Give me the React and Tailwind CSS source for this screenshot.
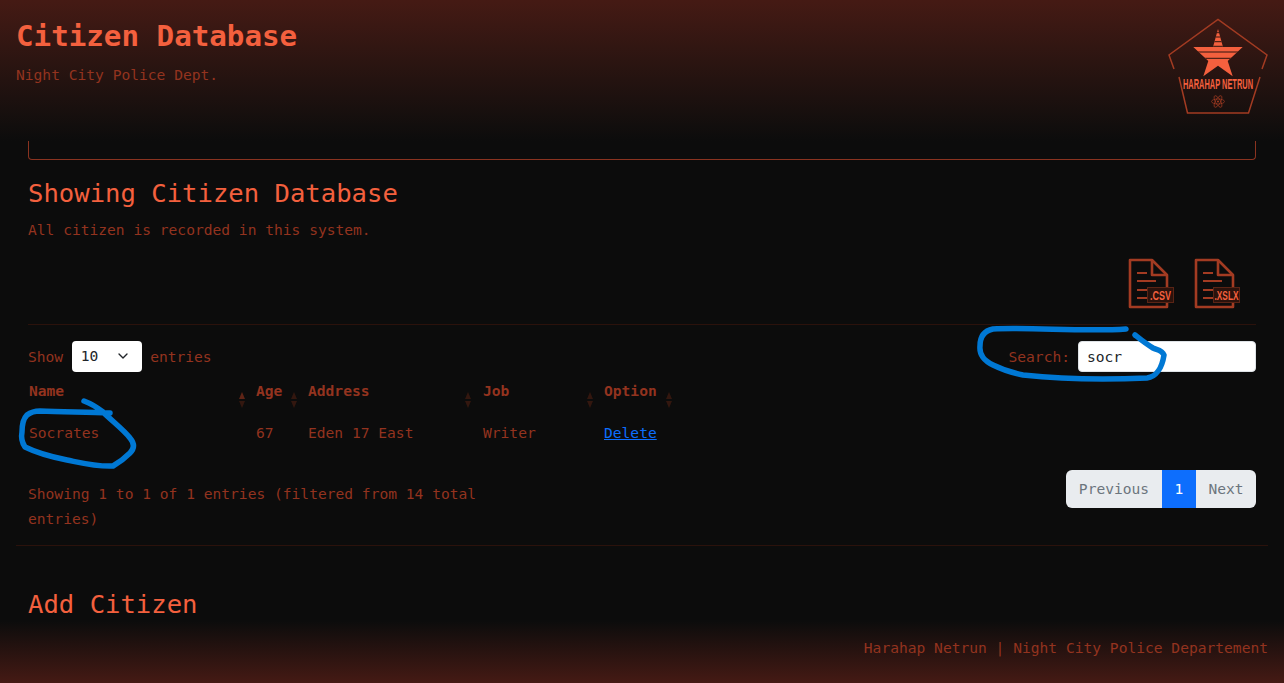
import { ChevronDown } from 'lucide-react'

const columns = [
  { label: 'Name', width: 'w-[227px]', arrow: 'right-[10px]', active: true },
  { label: 'Age', width: 'w-[52px]', arrow: 'right-[10px]' },
  { label: 'Address', width: 'w-[175px]', arrow: 'right-[11px]' },
  { label: 'Job', width: 'w-[121px]', arrow: 'right-[10px]' },
  { label: 'Option', width: 'w-[79px]', arrow: 'right-[10px]' },
]

const starPath = 'M98 29 103 47H122.700L107.700 61 112.700 76.300 98 65.700 83.300 76.300 88.300 61 73.300 47H93Z'

function SortArrows({ position, active }) {
  return (
    <span className={`absolute top-[11px] flex flex-col gap-[2px] ${position}`}>
      <span className={`h-0 w-0 border-x-[3.5px] border-b-[7px] border-x-transparent ${active ? 'border-b-[#5f2416]' : 'border-b-[#33170f]'}`} />
      <span className="h-0 w-0 border-x-[3.5px] border-t-[7px] border-x-transparent border-t-[#33170f]" />
    </span>
  )
}

function Logo() {
  const stripes = [32.7, 37, 41.7, 46.3, 52, 58.3]
  return (
    <svg width="164" height="130" viewBox="0 0 164 130" fill="none">
      <defs>
        <clipPath id="star-clip">
          <path d={starPath} />
        </clipPath>
      </defs>
      <path d="M54 69 49 55 98 19.500 147 55 142 69M140 77 128.500 113H67.500L59 77" stroke="#a33b22" strokeWidth="1.500" />
      <path d={starPath} fill="#f4603e" />
      <g clipPath="url(#star-clip)">
        {stripes.map((y) => (
          <path key={y} d={`M70 ${y}H126`} stroke="#2e140e" strokeWidth="1" />
        ))}
      </g>
      <text x="98" y="89.300" textAnchor="middle" textLength="70" lengthAdjust="spacingAndGlyphs" fill="#f4603e" fontFamily="'Liberation Sans', sans-serif" fontWeight="700" fontSize="14">
        HARAHAP NETRUN
      </text>
      <g stroke="#a33b22" strokeWidth="0.700">
        <ellipse cx="98" cy="101.500" rx="6.500" ry="2.500" />
        <ellipse cx="98" cy="101.500" rx="6.500" ry="2.500" transform="rotate(60 98 101.500)" />
        <ellipse cx="98" cy="101.500" rx="6.500" ry="2.500" transform="rotate(120 98 101.500)" />
      </g>
      <circle cx="98" cy="101.500" r="1" fill="#a33b22" />
    </svg>
  )
}

function FileIcon({ label, textWidth }) {
  return (
    <svg width="46" height="52" viewBox="0 0 46 52" fill="none">
      <path d="M2 2H24L39 17V49H2Z" stroke="#a33b22" strokeWidth="2.600" strokeLinejoin="round" />
      <path d="M24 2V17H39" stroke="#a33b22" strokeWidth="2.600" strokeLinejoin="round" />
      <path d="M9 15H19M9 23H28M9 32H19M9 40H19" stroke="#a33b22" strokeWidth="2" />
      <rect x="19.500" y="29.500" width="26" height="15" fill="#2b120c" stroke="#5a2415" />
      <text x="32.500" y="41.500" textAnchor="middle" textLength={textWidth} lengthAdjust="spacingAndGlyphs" fill="#f4603e" fontFamily="'Liberation Sans', sans-serif" fontWeight="700" fontSize="12">
        {label}
      </text>
    </svg>
  )
}

export default function App() {
  return (
    <div className="relative flex h-[683px] flex-col overflow-hidden bg-[#0c0c0c] font-['DejaVu_Sans_Mono',monospace] text-[14.600px] text-[#93331f]">
      <header className="relative flex h-[141px] shrink-0 justify-between bg-gradient-to-b from-[#451a14] to-[#0c0c0c] pl-4">
        <div>
          <h1 className="mt-[17px] text-[29.200px] leading-[38px] font-bold text-[#f4603e]">Citizen Database</h1>
          <p className="mt-[10px] leading-[20px]">Night City Police Dept.</p>
        </div>
        <Logo />
      </header>

      <main className="min-h-0 flex-1 overflow-hidden px-4">
        <div className="mx-3 h-[19px] rounded-b border-x border-b border-[#8a3320]" />
        <section className="px-3">
          <h2 className="mt-[17px] text-[25.600px] leading-[33px] text-[#f4603e]">Showing Citizen Database</h2>
          <p className="mt-[10px] leading-[20px]">All citizen is recorded in this system.</p>
          <div className="mt-[18px] flex justify-end gap-[20px] pr-[16px]">
            <FileIcon label=".CSV" textWidth={21} />
            <FileIcon label=".XSLX" textWidth={24} />
          </div>
          <div className="mt-[14px] border-t border-[#2b120c]" />
          <div className="mt-[16px] flex h-[31px] items-center justify-between">
            <div className="flex items-center gap-[8.500px]">
              <span>Show</span>
              <div className="relative h-[31px] w-[70px] rounded bg-white text-[#212529]">
                <span className="absolute top-[4px] left-[9px]">10</span>
                <ChevronDown className="absolute top-[7px] right-[11px]" size={16} strokeWidth={2} />
              </div>
              <span>entries</span>
            </div>
            <label className="flex items-center gap-2">
              <span>Search:</span>
              <input
                readOnly
                value="socr"
                className="h-[31px] w-[178px] rounded border border-[#dee2e6] bg-white px-2 text-[14.600px] text-[#212529] outline-none"
              />
            </label>
          </div>
          <table className="mt-[9px] table-fixed border-collapse">
            <thead>
              <tr>
                {columns.map((col) => (
                  <th key={col.label} className={`relative h-[31px] pl-px text-left align-top leading-[20px] font-bold ${col.width}`}>
                    {col.label}
                    <SortArrows position={col.arrow} active={col.active} />
                  </th>
                ))}
              </tr>
            </thead>
            <tbody>
              <tr className="h-[42px]">
                <td className="pl-px">Socrates</td>
                <td className="pl-px">67</td>
                <td className="pl-px">Eden 17 East</td>
                <td className="pl-px">Writer</td>
                <td className="pl-px">
                  <a href="#" className="text-[#0d6efd] underline">Delete</a>
                </td>
              </tr>
            </tbody>
          </table>
          <div className="mt-[16px] flex items-start justify-between">
            <p className="mt-[11px] w-[470px] leading-[25px]">Showing 1 to 1 of 1 entries (filtered from 14 total entries)</p>
            <nav className="flex h-[38px] overflow-hidden rounded-md bg-[#e9ecef] text-[#6c757d]">
              <span className="flex w-[96px] items-center justify-center">Previous</span>
              <span className="flex w-[34px] items-center justify-center bg-[#0d6efd] text-white">1</span>
              <span className="flex w-[60px] items-center justify-center">Next</span>
            </nav>
          </div>
        </section>
        <div className="mt-[14px] border-t border-[#2b120c]" />
        <h2 className="mt-[42px] px-3 text-[25.600px] leading-[33px] text-[#f4603e]">Add Citizen</h2>
      </main>

      <footer className="absolute inset-x-0 bottom-0 flex h-[62px] items-start justify-end bg-gradient-to-t from-[#451a14] to-transparent pr-4">
        <span className="mt-[17px] leading-[20px]">Harahap Netrun | Night City Police Departement</span>
      </footer>

      <svg className="pointer-events-none absolute inset-0" width="1284" height="683" fill="none" stroke="#0078d4" strokeWidth="5.500" strokeLinecap="round" strokeLinejoin="round">
        <path d="M1126 329C1085 332 1030 327 993 329 983 331 980 338 980 346 979 356 985 361 993 365 1003 370 1013 373 1023 375 1060 379 1105 380 1147 378 1156 377 1162 368 1164 355 1162 350 1157 350 1153 348 1146 344 1140 339 1135 335" />
        <path d="M84 401C92 404 98 408 103 412 112 421 124 430 130 438 135 444 134 449 130 453 125 458 120 462 113 466 98 467 82 463 67 460 52 457 37 453 25 447 21 441 21 437 22 432 22 425 23 419 27 415 31 412 35 411 40 411 63 412 87 412 110 413" />
      </svg>
    </div>
  )
}
